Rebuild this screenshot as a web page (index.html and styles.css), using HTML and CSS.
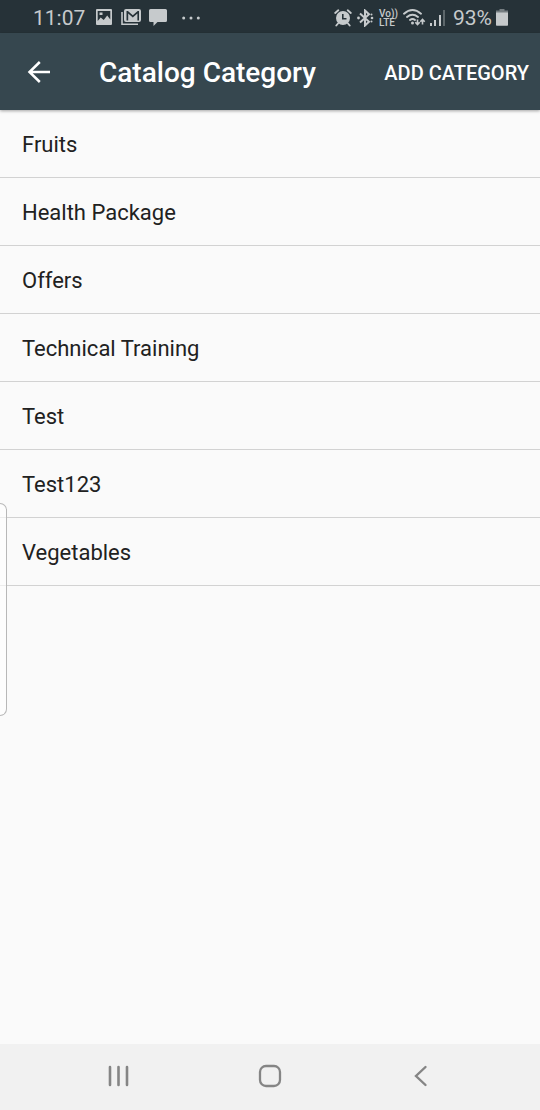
FILE: index.html
```html
<!DOCTYPE html>
<html lang="en">
<head>
<meta charset="utf-8">
<meta name="viewport" content="width=device-width, initial-scale=1">
<title>Catalog Category</title>
<link rel="stylesheet" href="styles.css">
</head>
<body>
<div class="screen">
  <div class="status">
    <div class="status-group">
      <span class="status-text">11:07</span>
      <svg class="icon-left" width="18" height="17" viewBox="0 0 18 17"><path fill="currentColor" fill-rule="evenodd" d="M2 0h14q1 0 1 1v14q0 1-1 1H2q-1 0-1-1V1q0-1 1-1zM2.700 2v10l3-3.500 3 2.500 3.500-4.500 3.100 4V2zM4.500 3.500h3v2.500h-3z"/></svg>
      <svg width="20" height="17" viewBox="0 0 20 17"><path fill="none" stroke="currentColor" stroke-width="1.600" d="M1 3v12.200h16"/><path fill="currentColor" fill-rule="evenodd" d="M5 0h13q2 0 2 2v9q0 2-2 2H5q-2 0-2-2V2q0-2 2-2zM5.500 2v9.500h1.700V4.500l4.600 4 4.600-4v7H18V2h-1.300l-4.900 4.200L6.900 2z"/></svg>
      <svg width="18" height="17" viewBox="0 0 18 17"><path fill="currentColor" d="M1.500 0h15Q18 0 18 1.500v10q0 1.500-1.500 1.500H8.500L4.500 17v-4h-3Q0 13 0 11.500v-10Q0 0 1.500 0z"/></svg>
      <svg class="icon-more" width="18" height="4" viewBox="0 0 18 4"><g fill="currentColor"><circle cx="1.700" cy="2" r="1.500"/><circle cx="9" cy="2" r="1.500"/><circle cx="16.300" cy="2" r="1.500"/></g></svg>
    </div>
    <div class="status-group status-right">
      <svg width="18" height="18" viewBox="0 0 18 18"><path fill="currentColor" fill-rule="evenodd" d="M9 2a7 7 0 1 1 0 14A7 7 0 0 1 9 2zM8 5v5.500h4.500V9H9.600V5z"/><path fill="none" stroke="currentColor" stroke-width="1.900" stroke-linecap="round" d="M1.200 4 4.300 1.300M16.800 4 13.700 1.300M4 14.500l-1.700 2M14 14.500l1.700 2"/></svg>
      <svg width="18" height="18" viewBox="0 0 18 18"><path fill="none" stroke="currentColor" stroke-width="2" d="M4 4.500l9 8.200L9 16.500v-15l4 3.800L4 13.500"/><g fill="currentColor"><circle cx="2.500" cy="9" r="1.400"/><circle cx="16" cy="9" r="1.300"/><circle cx="15.500" cy="5.500" r="1"/><circle cx="15.500" cy="12.500" r="1"/></g></svg>
      <span class="volte"><span>Vo))</span><span>LTE</span></span>
      <svg width="23" height="17" viewBox="0 0 23 17"><g fill="none" stroke="currentColor" stroke-width="1.900" stroke-linecap="round"><path d="M1 4.700Q9.500-2.700 18 4.700M4 8q5.500-4.500 11 0M7 11q2.500-2 5 0"/></g><circle cx="9.500" cy="14" r="1.500" fill="currentColor"/><path fill="none" stroke="currentColor" stroke-width="1.600" d="M14.500 10.500v5M12.300 13.200l2.200 2.300 2.200-2.300M19.500 15.500v-5M17.300 12.800l2.200-2.300 2.200 2.300"/></svg>
      <svg class="icon-signal" width="16" height="16" viewBox="0 0 16 16"><g fill="currentColor"><path d="M0 13h2v3H0zM4 10h2v6H4zM9 5h2v11H9z"/><path opacity=".35" d="M13 0h2v16h-2z"/></g></svg>
      <span class="status-text">93%</span>
      <svg width="12" height="17" viewBox="0 0 12 17"><path fill="currentColor" opacity=".5" d="M3.500 0h5v1.500H12V4H0V1.500h3.500z"/><path fill="currentColor" d="M0 3.500h12V16q0 .8-.8.800H.8Q0 16.800 0 16z"/></svg>
    </div>
  </div>
  <header class="toolbar">
    <button class="back" type="button" aria-label="Back"><svg width="24" height="24" viewBox="0 0 24 24"><path fill="none" stroke="currentColor" stroke-width="2.500" d="M23 11H3M12.800 1 2.500 11l10.300 10"/></svg></button>
    <h1 class="title">Catalog Category</h1>
    <button class="add" type="button">ADD CATEGORY</button>
  </header>
  <main class="content">
    <ul class="list">
      <li class="row">Fruits</li>
      <li class="row">Health Package</li>
      <li class="row">Offers</li>
      <li class="row">Technical Training</li>
      <li class="row">Test</li>
      <li class="row">Test123</li>
      <li class="row">Vegetables</li>
    </ul>
  </main>
  <nav class="navbar">
    <button class="nav-button" type="button" aria-label="Recent apps"><svg width="24" height="24" viewBox="0 0 24 24"><path fill="none" stroke="currentColor" stroke-width="2.600" stroke-linecap="round" d="M4 3v18M12.500 3v18M21 3v18"/></svg></button>
    <button class="nav-button" type="button" aria-label="Home"><svg width="24" height="24" viewBox="0 0 24 24"><rect x="2" y="2" width="20" height="20" rx="6" fill="none" stroke="currentColor" stroke-width="2.300"/></svg></button>
    <button class="nav-button" type="button" aria-label="Back"><svg width="24" height="24" viewBox="0 0 24 24"><path fill="none" stroke="currentColor" stroke-width="2.400" stroke-linecap="round" d="M16.500 3 7 12l9.500 9"/></svg></button>
  </nav>
  <div class="edge-handle"></div>
</div>
</body>
</html>
```
FILE: styles.css
```css
* {
  box-sizing: border-box;
}

body {
  margin: 0;
  background: #fafafa;
  color: #212121;
  font-family: Roboto, "Liberation Sans", sans-serif;
}

button {
  padding: 0;
  border: 0;
  background: none;
  color: inherit;
  font: inherit;
}

svg {
  display: block;
  flex: none;
}

.screen {
  position: relative;
  display: flex;
  flex-direction: column;
  min-height: 100vh;
}

.status {
  display: flex;
  justify-content: space-between;
  padding: 2px 32px 0 33px;
  background: #263238;
  color: #c6cacc;
}

.status-group {
  display: flex;
  align-items: center;
  gap: 8px;
  height: 31px;
}

.status-right {
  gap: 4px;
}

.status-text {
  font-size: 21px;
  line-height: 30px;
}

.icon-left {
  margin-left: 2px;
}

.icon-more {
  margin-left: 7px;
}

.volte {
  display: flex;
  flex-direction: column;
  margin: 0 1px;
  font-size: 10px;
  font-weight: 500;
  line-height: 9px;
}

.icon-signal {
  margin-right: 3px;
}

.toolbar {
  display: flex;
  align-items: center;
  height: 77px;
  padding: 2px 11px 0 27px;
  background: #36474f;
  color: #fff;
  box-shadow: 0 1px 3px rgba(0, 0, 0, 0.35);
  z-index: 1;
}

.title {
  flex: 1;
  margin: 0 0 0 48px;
  font-size: 28px;
  font-weight: 500;
  line-height: 36px;
}

.add {
  font-size: 20px;
  font-weight: 500;
  line-height: 24px;
}

.content {
  flex: 1;
}

.list {
  margin: 0;
  padding: 0;
  list-style: none;
}

.row {
  padding: 21px 22px 18px;
  border-bottom: 1px solid #d2d2d2;
  font-size: 22px;
  line-height: 28px;
}

.navbar {
  display: flex;
  justify-content: space-between;
  padding: 0 79px 2px 78px;
  background: #f1f1f1;
  color: #858585;
}

.nav-button {
  display: flex;
  align-items: center;
  justify-content: center;
  width: 80px;
  height: 64px;
}

.edge-handle {
  position: absolute;
  top: 503px;
  left: 0;
  width: 7px;
  height: 213px;
  border: 1px solid #b8b8b8;
  border-left: 0;
  border-radius: 0 7px 7px 0;
  background: rgba(255, 255, 255, 0.6);
}
```
